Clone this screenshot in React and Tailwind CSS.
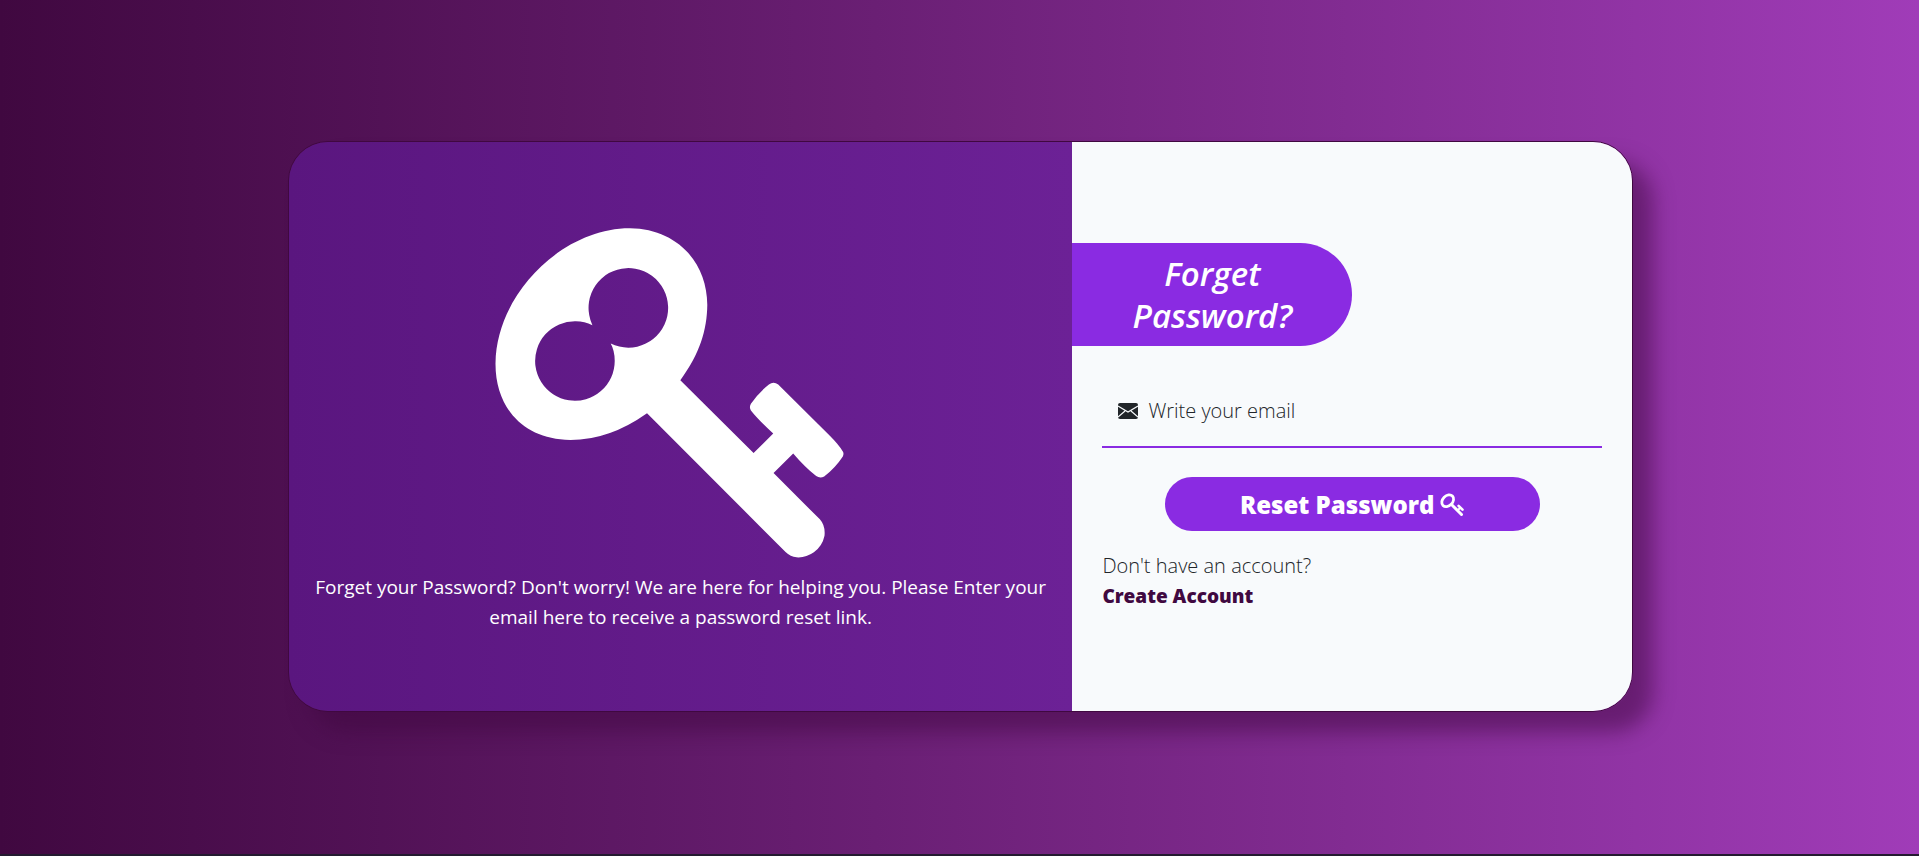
function KeyIcon({ className }) {
  return (
    <svg className={className} viewBox="45 54 1047 991" fill="currentColor" aria-hidden="true">
      <path
        fillRule="evenodd"
        d="M601 511L821 730L880 671Q835 630 813 602Q807 593 813 582Q835 549 867 524Q881 514 895 524L1050 678Q1076 704 1089 725Q1093 731 1089 740Q1066 775 1033 800Q1021 807 1009 799Q974 771 940 731L881 790L1020 929Q1037 948 1034 978Q1028 1008 1002 1028Q978 1045 950 1043Q932 1041 917 1027L501 610Q380 696 255 690C125 682 45 590 46 460C48 250 250 54 450 55C590 57 681 155 682 285C681 360 660 430 601 511ZM337 346L331 330A119.500 119.500 0 1 1 392 401Q404 423 404 453A119.500 119.500 0 1 1 337 346Z"
      />
    </svg>
  );
}

function SmallKeyIcon({ className }) {
  return (
    <svg className={className} viewBox="0 0 24 24" fill="none" stroke="currentColor" aria-hidden="true">
      <ellipse cx="7.700" cy="7.700" rx="6.700" ry="5" strokeWidth="2.800" transform="rotate(-45 7.700 7.700)" />
      <path d="M11.500 11.500L21.500 21.500" strokeWidth="3" strokeLinecap="round" />
      <path d="M17.500 17.500L20.300 14.700" strokeWidth="2" />
      <path d="M18.600 12.800L22.500 16.700" strokeWidth="2.600" strokeLinecap="round" />
    </svg>
  );
}

function EnvelopeIcon({ className }) {
  return (
    <svg className={className} viewBox="0 0 20 16" aria-hidden="true">
      <rect width="20" height="16" rx="2" fill="#212529" />
      <path d="M0 3L10 9L20 3M0 14L7 8M20 14L13 8" fill="none" stroke="#f8fafc" strokeWidth="1.2" />
    </svg>
  );
}

export default function App() {
  return (
    <div className="flex min-h-screen flex-col border-b-2 border-[#241a30] bg-linear-to-r from-[#400840] to-[#a03cb8] font-['Open_Sans',sans-serif] text-[19px] leading-[30px] text-[#212529]">
      <main className="mt-[141px] mb-16 ml-[15%] flex min-h-[571px] w-[70.1%] overflow-hidden rounded-[40px] border border-[#400840] shadow-[20px_20px_20px_0_rgba(64,8,64,0.5)]">
        <section className="flex w-7/12 flex-col items-center justify-center bg-linear-to-r from-[#5a167f] to-[#6c2196] px-6 pt-[6px] text-center text-white">
          <KeyIcon className="mr-[22px] h-[330px] w-[349px]" />
          <p className="mt-[14px]">
            Forget your Password? Don't worry! We are here for helping you. Please Enter your email here to receive a password reset link.
          </p>
        </section>
        <section className="flex w-5/12 flex-col justify-center bg-slate-50">
          <h1 className="flex w-1/2 justify-center rounded-r-full bg-[#8a2be2] px-12 pt-[10px] pb-[9px] text-center text-[33px] leading-[42px] font-semibold text-white italic">
            Forget Password?
          </h1>
          <form className="px-[30px] pt-9 font-light" onSubmit={(e) => e.preventDefault()}>
            <label className="flex h-[66px] items-center gap-[10px] border-b-2 border-[#8a2be2] px-4 pb-[6px]">
              <EnvelopeIcon className="h-4 w-5" />
              <input
                type="email"
                aria-label="Write your email"
                placeholder="Write your email"
                className="min-w-0 flex-1 bg-transparent text-xl outline-none placeholder:text-[#212529]"
              />
            </label>
            <button
              type="submit"
              className="mx-auto mt-[29px] flex h-[54px] w-3/4 items-center justify-center gap-[6px] rounded-full bg-[#8a2be2] pt-[2px] text-2xl font-extrabold text-white"
            >
              Reset Password
              <SmallKeyIcon className="h-6 w-6" />
            </button>
            <p className="mt-5 text-xl leading-[30px]">Don't have an account?</p>
            <a href="#create" className="font-extrabold text-[#400840]">
              Create Account
            </a>
          </form>
        </section>
      </main>
    </div>
  );
}
